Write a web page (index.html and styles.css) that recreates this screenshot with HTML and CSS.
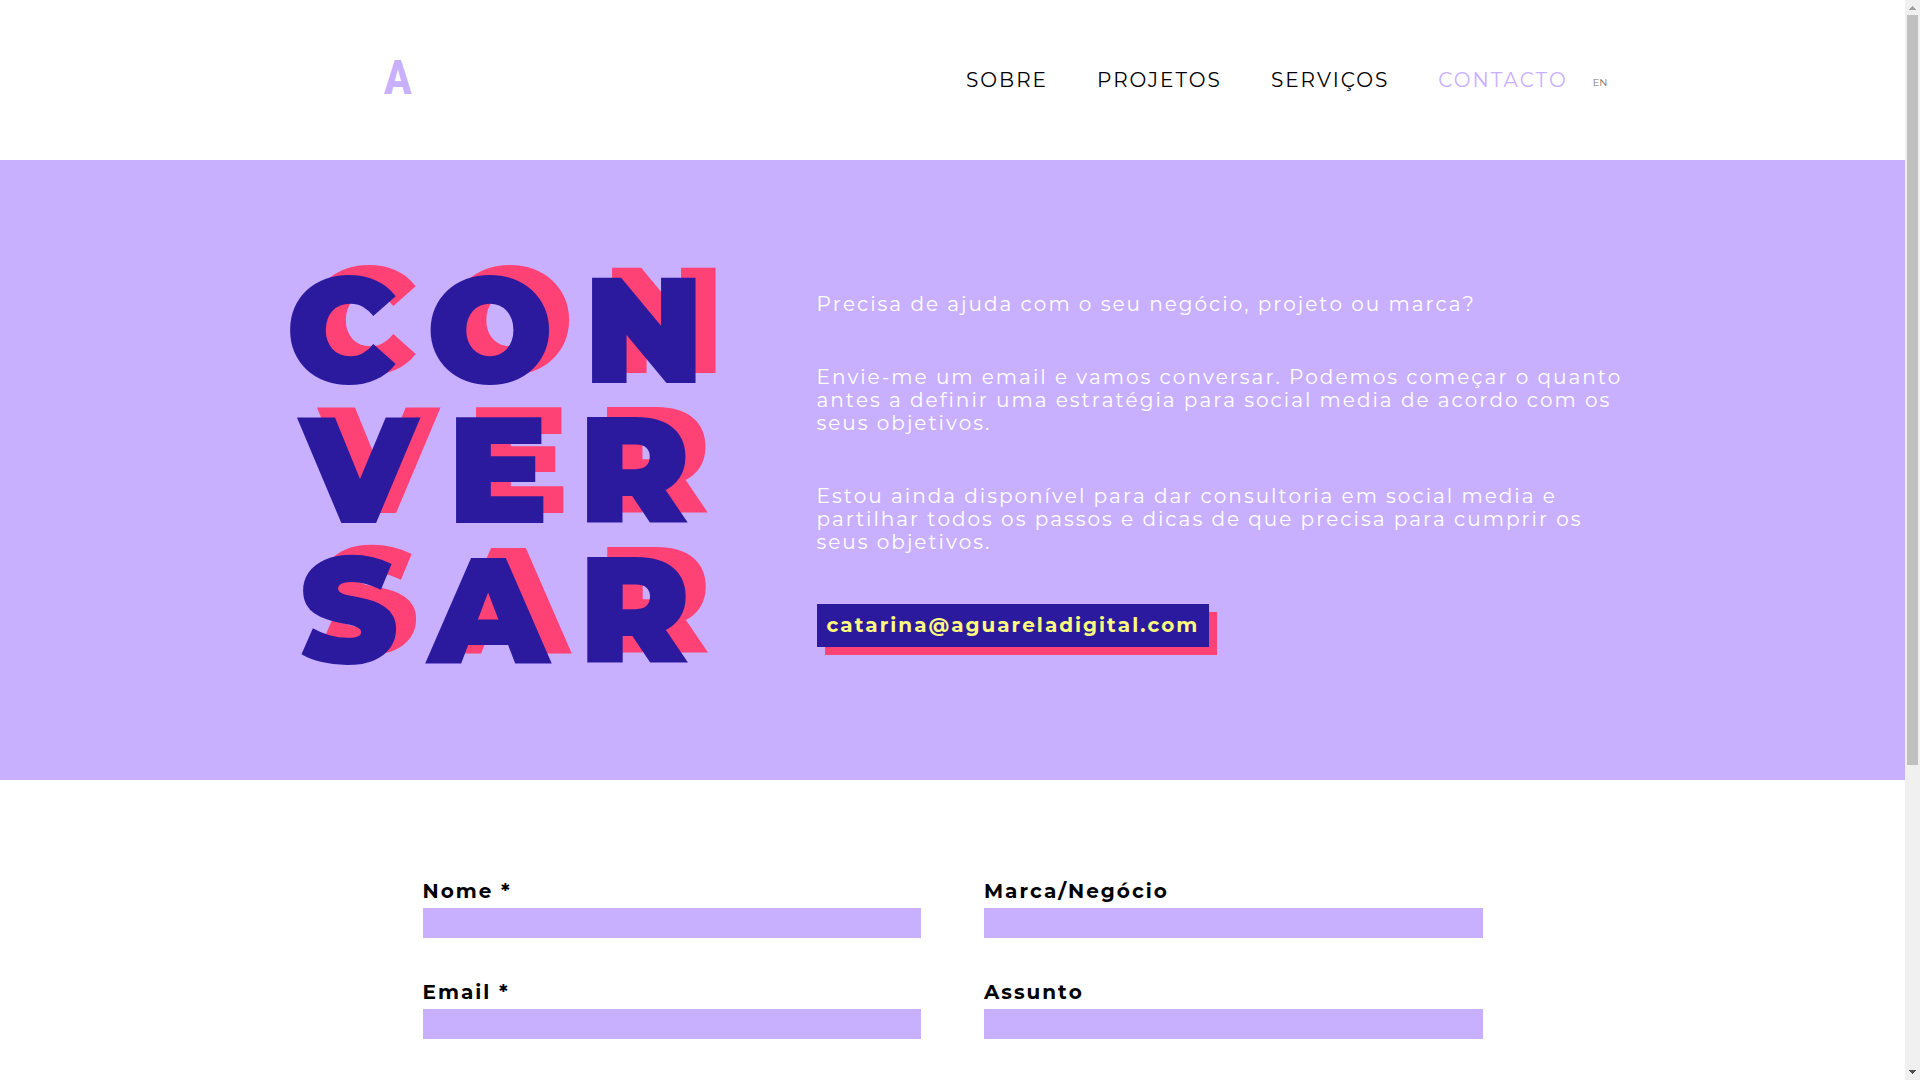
FILE: index.html
```html
<!DOCTYPE html>
<html lang="pt">
<head>
<meta charset="utf-8">
<meta name="viewport" content="width=device-width, initial-scale=1">
<title>Contacto</title>
<link rel="stylesheet" href="styles.css">
</head>
<body>
<header class="header">
  <a class="logo" href="#">A</a>
  <nav class="nav">
    <a class="nav-link" href="#">SOBRE</a>
    <a class="nav-link" href="#">PROJETOS</a>
    <a class="nav-link" href="#">SERVIÇOS</a>
    <a class="nav-link nav-link-active" href="#">CONTACTO</a>
    <a class="lang" href="#">EN</a>
  </nav>
</header>
<main>
  <section class="hero">
    <h1 class="title">CON<br>VER<br>SAR</h1>
    <div class="intro">
      <p>Precisa de ajuda com o seu negócio, projeto ou marca?</p>
      <p>Envie-me um email e vamos conversar. Podemos começar o quanto antes a definir uma estratégia para social media de acordo com os seus objetivos.</p>
      <p>Estou ainda disponível para dar consultoria em social media e partilhar todos os passos e dicas de que precisa para cumprir os seus objetivos.</p>
      <a class="email" href="mailto:catarina@aguareladigital.com">catarina@aguareladigital.com</a>
    </div>
  </section>
  <form class="form">
    <div class="field"><label for="nome">Nome *</label><input id="nome" type="text" required></div>
    <div class="field"><label for="marca">Marca/Negócio</label><input id="marca" type="text"></div>
    <div class="field"><label for="email">Email *</label><input id="email" type="email" required></div>
    <div class="field"><label for="assunto">Assunto</label><input id="assunto" type="text"></div>
  </form>
</main>
<div class="scrollbar" aria-hidden="true">
  <svg class="arrow arrow-up" viewBox="0 0 7 4"><path d="M3 0h1v1h1v1h1v1h1v1H0V3h1V2h1V1h1z"/></svg>
  <div class="track"><div class="thumb"></div></div>
  <svg class="arrow" viewBox="0 0 7 4"><path d="M0 0h7v1H6v1H5v1H4v1H3V3H2V2H1V1H0z"/></svg>
</div>
</body>
</html>
```
FILE: styles.css
```css
* { box-sizing: border-box; }

body {
  margin: 0;
  padding-right: 15px;
  background: #fff;
  color: #000;
  font-family: Montserrat, Inter, sans-serif;
  font-size: 20px;
  line-height: 23px;
  letter-spacing: 2px;
  font-kerning: none;
}

a { color: inherit; text-decoration: none; }

.header {
  display: flex;
  align-items: center;
  justify-content: space-between;
  width: 100%;
  max-width: 1310px;
  height: 160px;
  margin: 0 auto;
  padding-left: 86px;
}

.logo {
  padding-bottom: 5px;
  color: #c9b0ff;
  font-family: "Roboto Condensed", "DejaVu Sans Mono", monospace;
  font-size: 48px;
  font-weight: 700;
  line-height: 48px;
  letter-spacing: 0;
}

.nav {
  display: flex;
  align-items: center;
  gap: 49px;
  font-kerning: normal;
}
.nav-link-active { color: #c9b0ff; }
.lang {
  margin-left: -24px;
  padding-top: 4px;
  color: #777;
  font-size: 10px;
  letter-spacing: 0;
}

.hero {
  display: grid;
  grid-template-columns: 467px minmax(0, 812px);
  justify-content: center;
  align-items: center;
  gap: 73px;
  padding: 100px 20px;
  background: #c9b0ff;
}

.title {
  margin: 0;
  color: #2b1a9e;
  font-size: 150px;
  font-weight: 900;
  line-height: 140px;
  letter-spacing: 30px;
  text-align: center;
  text-shadow: 20px -10px 0 #ff4275;
}

.intro {
  display: flex;
  flex-direction: column;
  align-items: flex-start;
  gap: 50px;
  color: #fff;
}
.intro p { margin: 0; }

.email {
  padding: 10px;
  background: #2b1a9e;
  box-shadow: 8px 8px 0 #ff4275;
  color: #fffb7d;
  font-weight: 700;
}

.form {
  display: grid;
  grid-template-columns: 1fr 1fr;
  gap: 41px 63px;
  width: 100%;
  max-width: 1060px;
  margin: 0 auto;
  padding: 98px 0 41px;
}
.field { display: flex; flex-direction: column; gap: 4px; font-weight: 700; }
.field label { line-height: 26px; }
.field input {
  width: 100%;
  height: 30px;
  padding: 0 10px;
  border: 0;
  border-radius: 0;
  background: #c9b0ff;
  font: inherit;
}

.scrollbar {
  position: fixed;
  top: 0;
  right: 0;
  bottom: 0;
  display: flex;
  flex-direction: column;
  align-items: center;
  gap: 5px;
  width: 15px;
  padding: 6px 0;
  background: #f0f0f0;
}
.track { flex: 1; width: 11px; }
.thumb { height: calc(100% * 5 / 7); background: #c0c0c0; }
.arrow { width: 7px; height: 4px; fill: #505050; }
.arrow-up { fill: #a0a0a0; }
```
